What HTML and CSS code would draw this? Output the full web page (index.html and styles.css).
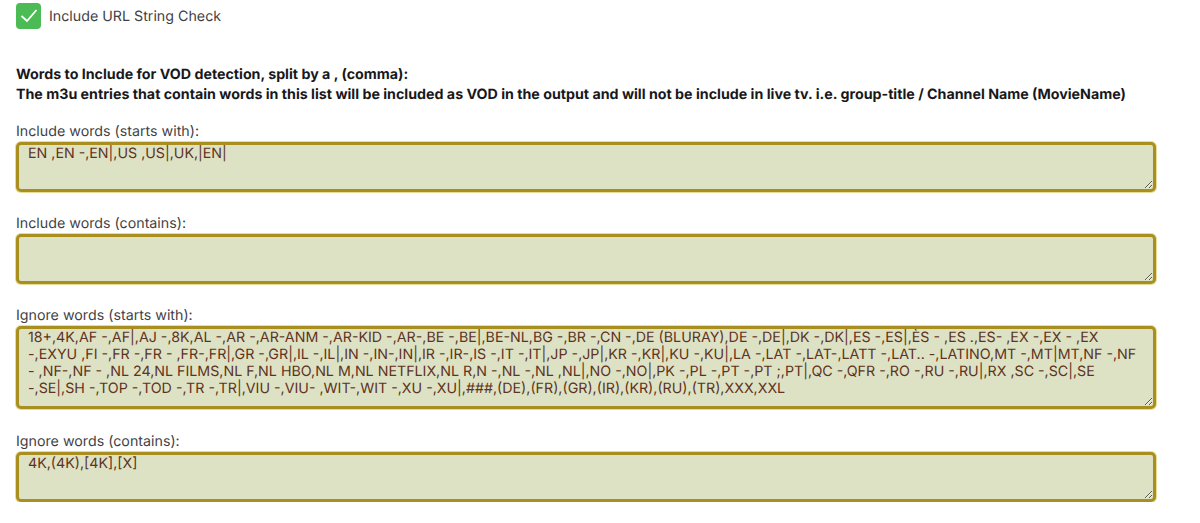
FILE: index.html
```html
<!DOCTYPE html>
<html lang="en">
<head>
  <meta charset="UTF-8" />
  <meta name="viewport" content="width=device-width, initial-scale=1.0"/>
  <title>VOD detection settings</title>
  <link rel="stylesheet" href="styles.css">
</head>
<body>
  <div class="check-row">
    <span class="check-box">
      <svg width="18" height="18" viewBox="0 0 18 18" fill="none" stroke="#fff" stroke-width="1.8"><path d="M1.5 9l5.500 5 9.500-11"/></svg>
    </span>
    <span class="check-label">Include URL String Check</span>
  </div>

  <p class="intro">Words to Include for VOD detection, split by a , (comma):<br>The m3u entries that contain words in this list will be included as VOD in the output and will not be include in live tv. i.e. group-title / Channel Name (MovieName)</p>

  <div class="form-group">
    <label for="inc-start">Include words (starts with):</label>
    <textarea id="inc-start">EN ,EN -,EN|,US ,US|,UK,|EN|</textarea>
  </div>
  <div class="form-group">
    <label for="inc-contains">Include words (contains):</label>
    <textarea id="inc-contains"></textarea>
  </div>
  <div class="form-group">
    <label for="ign-start">Ignore words (starts with):</label>
    <textarea id="ign-start" class="tall">18+,4K,AF -,AF|,AJ -,8K,AL -,AR -,AR-ANM -,AR-KID -,AR-,BE -,BE|,BE-NL,BG -,BR -,CN -,DE (BLURAY),DE -,DE|,DK -,DK|,ES -,ES|,ÈS - ,ES .,ES- ,EX -,EX - ,EX -,EXYU ,FI -,FR -,FR - ,FR-,FR|,GR -,GR|,IL -,IL|,IN -,IN-,IN|,IR -,IR-,IS -,IT -,IT|,JP -,JP|,KR -,KR|,KU -,KU|,LA -,LAT -,LAT-,LATT -,LAT.. -,LATINO,MT -,MT|MT,NF -,NF - ,NF-,NF - ,NL 24,NL FILMS,NL F,NL HBO,NL M,NL NETFLIX,NL R,N -,NL -,NL ,NL|,NO -,NO|,PK -,PL -,PT -,PT ;,PT|,QC -,QFR -,RO -,RU -,RU|,RX ,SC -,SC|,SE -,SE|,SH -,TOP -,TOD -,TR -,TR|,VIU -,VIU- ,WIT-,WIT -,XU -,XU|,###,(DE),(FR),(GR),(IR),(KR),(RU),(TR),XXX,XXL</textarea>
  </div>
  <div class="form-group">
    <label for="ign-contains">Ignore words (contains):</label>
    <textarea id="ign-contains">4K,(4K),[4K],[X]</textarea>
  </div>
</body>
</html>
```

FILE: styles.css
```css
body {
  margin: 0;
  padding: 3px 44px 0 16px;
  font-family: Inter, sans-serif;
  font-size: 14.24px;
  line-height: 17px;
  color: #3f3f46;
  background-color: #fff;
  text-rendering: geometricPrecision;
}

.check-row {
  display: flex;
  align-items: center;
  gap: 8px;
  height: 26px;
}

.check-box {
  width: 25px;
  height: 26px;
  display: flex;
  align-items: center;
  justify-content: center;
  background-color: #4cbb55;
  border-radius: 4px;
}

.intro {
  margin: 36px 0 0;
  font-size: 14.24px;
  line-height: 20px;
  font-weight: 700;
  color: #18181b;
}

.form-group {
  margin-top: 18px;
}

.form-group + .form-group {
  margin-top: 23px;
}

.form-group + .form-group:last-child {
  margin-top: 24px;
}

.form-group label {
  display: block;
  margin-bottom: 2px;
}

.form-group textarea {
  display: block;
  box-sizing: border-box;
  width: 100%;
  height: 50px;
  margin: 0;
  padding: 0 9px;
  font-family: Inter, sans-serif;
  font-size: 14.24px;
  line-height: 17px;
  color: #5f3320;
  background-color: #dde2c5;
  border: 3px solid #a98f1f;
  border-radius: 5px;
  box-shadow: 0 0 0 1px #e9dc98;
  outline: none;
  text-rendering: geometricPrecision;
}

.form-group textarea.tall {
  height: 83px;
}
```
